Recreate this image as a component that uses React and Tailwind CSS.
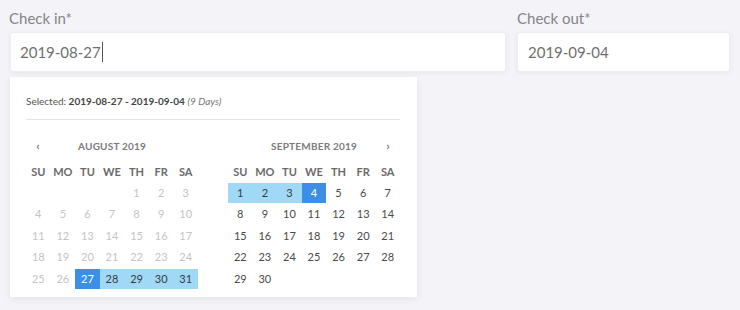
import React from 'react';

const WEEK = ['SU', 'MO', 'TU', 'WE', 'TH', 'FR', 'SA'];

const Day = ({ d, kind }) => {
    // kind: off | normal | range | edge | empty
    let cls = 'text-[#4a4a4a]';
    if (kind === 'off') cls = 'text-[#c4c4c4]';
    if (kind === 'range') cls = 'bg-[#9fd9f6] text-[#3a3a3a]';
    if (kind === 'edge') cls = 'bg-[#3d8fe6] text-white';
    return (
        <div className={`h-[20px] flex items-center justify-center text-[11px] ${cls}`}>
            {kind === 'empty' ? '' : d}
        </div>
    );
};

const Month = ({ title, cells, prev, next }) => (
    <div className="w-[172px]">
        <div className="flex items-center h-[16px] text-[10px] font-bold text-[#7b7b7b]">
            <span className="w-[24px] text-center text-[12px]">{prev ? '‹' : ''}</span>
            <span className="flex-1 text-center tracking-[0.2px]">{title}</span>
            <span className="w-[24px] text-center text-[12px]">{next ? '›' : ''}</span>
        </div>
        <div className="grid grid-cols-7 mt-[10px] text-[11px] font-bold text-[#6a6a6a]">
            {WEEK.map((w) => (
                <div key={w} className="h-[16px] flex items-center justify-center">{w}</div>
            ))}
        </div>
        <div className="grid grid-cols-7 gap-y-[1.5px] mt-[3px]">
            {cells.map((c, i) => (
                <Day key={i} d={c.d} kind={c.k} />
            ))}
        </div>
    </div>
);

const august = [];
for (let i = 0; i < 4; i++) august.push({ d: '', k: 'empty' });
for (let d = 1; d <= 31; d++) {
    let k = 'off';
    if (d === 27) k = 'edge';
    else if (d > 27) k = 'range';
    august.push({ d, k });
}

const september = [];
for (let d = 1; d <= 30; d++) {
    let k = 'normal';
    if (d < 4) k = 'range';
    if (d === 4) k = 'edge';
    september.push({ d, k });
}

export default function App() {
    return (
        <div
            className="w-[740px] h-[310px] bg-[#f4f4f8] overflow-hidden"
            style={{ fontFamily: 'Lato, "Open Sans", sans-serif' }}
        >
            <div className="flex pt-[9px] pl-[10px] gap-[11px]">
                <div className="w-[496px]">
                    <div className="text-[15px] text-[#858585] -ml-[1px] leading-[18px]">Check in*</div>
                    <div className="mt-[5px] h-[40px] bg-white rounded-[3px] shadow-[0_1px_4px_rgba(0,0,0,0.06)] border border-[#eceef3] flex items-center pl-[9px] text-[15px] text-[#707070]">
                        2019-08-27<span className="inline-block w-px h-[20px] bg-[#555] ml-[1px]"></span>
                    </div>
                    <div className="mt-[5px] w-[407px] h-[220px] bg-white shadow-[0_2px_8px_rgba(0,0,0,0.07)] px-[16px]">
                        <div className="pt-[17px] text-[10px] text-[#555]">
                            Selected: <span className="font-bold text-[#444]">2019-08-27 - 2019-09-04</span>{' '}
                            <span className="italic text-[#777]">(9 Days)</span>
                        </div>
                        <div className="mt-[10px] border-t border-[#e4e4e4] w-[374px]"></div>
                        <div className="flex gap-[30px] mt-[18px]">
                            <Month title="AUGUST 2019" cells={august} prev />
                            <Month title="SEPTEMBER 2019" cells={september} next />
                        </div>
                    </div>
                </div>
                <div className="w-[213px]">
                    <div className="text-[15px] text-[#858585] leading-[18px]">Check out*</div>
                    <div className="mt-[5px] h-[40px] bg-white rounded-[3px] shadow-[0_1px_4px_rgba(0,0,0,0.06)] border border-[#eceef3] flex items-center pl-[10px] text-[15px] text-[#707070]">
                        2019-09-04
                    </div>
                </div>
            </div>
        </div>
    );
}
